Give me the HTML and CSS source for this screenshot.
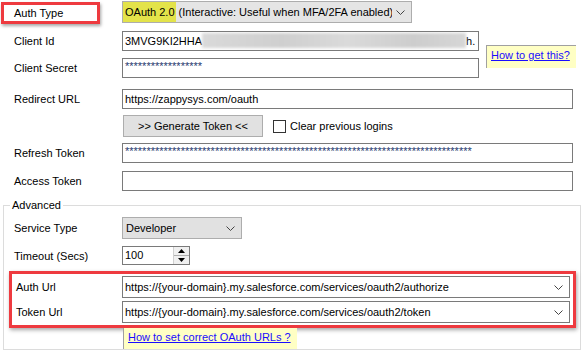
FILE: index.html
```html
<!DOCTYPE html>
<html lang="en">
<head>
  <meta charset="UTF-8">
  <title>OAuth Connection</title>
  <link rel="stylesheet" href="styles.css">
</head>
<body>
  <div class="form">
    <div class="row row-auth">
      <div class="lbl"><span class="mark">Auth Type</span></div>
      <div class="combo combo-auth">
        <span class="combo-text"><span class="hl">OAuth 2.0</span> (Interactive: Useful when MFA/2FA enabled)</span>
        <svg class="chev" width="9" height="5" viewBox="0 0 9 5"><path d="M0.5 0.5 L4.5 4.5 L8.5 0.5" fill="none" stroke="#444" stroke-width="1"/></svg>
      </div>
    </div>

    <div class="pair">
      <div class="pair-rows">
        <div class="row row-id">
          <div class="lbl">Client Id</div>
          <div class="field field-short">3MVG9KI2HHA<span class="blur"></span>h.</div>
        </div>
        <div class="row row-secret">
          <div class="lbl">Client Secret</div>
          <div class="field field-short secret">******************</div>
        </div>
      </div>
      <div class="help help-get"><a href="#">How to get this?</a></div>
    </div>

    <div class="row row-redirect">
      <div class="lbl">Redirect URL</div>
      <div class="field field-long">https://zappysys.com/oauth</div>
    </div>

    <div class="row row-generate">
      <div class="lbl"></div>
      <button class="btn">&gt;&gt; Generate Token &lt;&lt;</button>
      <span class="check"></span>
      <span class="check-text">Clear previous logins</span>
    </div>

    <div class="row row-refresh">
      <div class="lbl">Refresh Token</div>
      <div class="field field-long secret">*********************************************************************************</div>
    </div>

    <div class="row row-access">
      <div class="lbl">Access Token</div>
      <div class="field field-long"></div>
    </div>

    <fieldset class="group">
      <legend>Advanced</legend>

      <div class="row row-service">
        <div class="lbl">Service Type</div>
        <div class="combo combo-service">
          <span class="combo-text">Developer</span>
          <svg class="chev" width="9" height="5" viewBox="0 0 9 5"><path d="M0.5 0.5 L4.5 4.5 L8.5 0.5" fill="none" stroke="#444" stroke-width="1"/></svg>
        </div>
      </div>

      <div class="row row-timeout">
        <div class="lbl">Timeout (Secs)</div>
        <div class="field spin-field">
          <span class="spin-val">100</span>
          <span class="spin">
            <span class="spin-btn"><svg width="7" height="4" viewBox="0 0 7 4"><path d="M3.5 0 L7 4 L0 4 Z" fill="#000"/></svg></span>
            <span class="spin-btn"><svg width="7" height="4" viewBox="0 0 7 4"><path d="M0 0 L7 0 L3.5 4 Z" fill="#000"/></svg></span>
          </span>
        </div>
      </div>

      <div class="mark-box">
        <div class="row row-url">
          <div class="url-lbl">Auth Url</div>
          <div class="combo combo-url">
            <span class="combo-text">https://{your-domain}.my.salesforce.com/services/oauth2/authorize</span>
            <svg class="chev" width="9" height="5" viewBox="0 0 9 5"><path d="M0.5 0.5 L4.5 4.5 L8.5 0.5" fill="none" stroke="#444" stroke-width="1"/></svg>
          </div>
        </div>
        <div class="row row-url row-token">
          <div class="url-lbl">Token Url</div>
          <div class="combo combo-url">
            <span class="combo-text">https://{your-domain}.my.salesforce.com/services/oauth2/token</span>
            <svg class="chev" width="9" height="5" viewBox="0 0 9 5"><path d="M0.5 0.5 L4.5 4.5 L8.5 0.5" fill="none" stroke="#444" stroke-width="1"/></svg>
          </div>
        </div>
      </div>

      <div class="help help-urls"><a href="#">How to set correct OAuth URLs ?</a></div>
    </fieldset>
  </div>
</body>
</html>
```

FILE: styles.css
```css
* {
  box-sizing: border-box;
}
body {
  margin: 0;
  background-color: #fff;
  font-family: "Liberation Sans", Arial, sans-serif;
  font-size: 11px;
  color: #000;
}
.form {
  width: 583px;
  height: 354px;
  overflow: hidden;
}
.row {
  display: flex;
  align-items: center;
}
.lbl {
  width: 122px;
  flex-shrink: 0;
  padding-left: 14px;
  white-space: nowrap;
}
.row-auth {
  margin-top: 1px;
  height: 22px;
}
.row-auth .lbl {
  padding-left: 1px;
  align-self: flex-start;
}
.mark {
  display: block;
  width: 99px;
  height: 22px;
  margin-top: 1px;
  padding-left: 10px;
  line-height: 16px;
  border: 3px solid #ee3a3f;
  box-shadow: 1px 2px 3px rgba(0, 0, 0, 0.35);
}
.combo {
  display: flex;
  align-items: center;
  height: 22px;
  border: 1px solid #adadad;
  background-color: #e5e5e5;
  padding-left: 2px;
}
.combo-text {
  flex: 1;
  white-space: nowrap;
  overflow: hidden;
}
.chev {
  margin: 0 6px 0 4px;
  flex-shrink: 0;
}
.combo-auth {
  width: 290px;
  padding-left: 0;
}
.hl {
  display: inline-block;
  background-color: #e3e34a;
  padding: 4px 1px 4px 2px;
}
.field {
  height: 20px;
  border: 1px solid #7a7a7a;
  background-color: #fff;
  padding-left: 2px;
  line-height: 18px;
  white-space: nowrap;
  overflow: hidden;
}
.field-short {
  width: 357px;
}
.field-long {
  width: 451px;
}
.secret {
  line-height: 14px;
  color: #26386e;
}
.blur {
  display: inline-block;
  width: 264px;
  height: 15px;
  vertical-align: -3px;
  background: linear-gradient(90deg, #d9d9d9, #cfcfcf 30%, #dadada 55%, #cdcdcd 80%, #d6d6d6);
  filter: blur(1.5px);
}
.pair {
  display: flex;
  margin-top: 8px;
}
.row-id {
  height: 20px;
}
.row-secret {
  height: 20px;
  margin-top: 7px;
}
.help {
  background-color: #ffffc4;
  white-space: nowrap;
}
.help a {
  color: #1a0dff;
  text-decoration: underline;
}
.help-get {
  width: 90px;
  height: 23px;
  margin: 14px 0 0 7px;
  border-top: 1px solid #a0a0a0;
  border-left: 1px solid #a0a0a0;
  padding: 3px 0 0 4px;
}
.row-redirect {
  height: 20px;
  margin-top: 11px;
}
.row-generate {
  height: 22px;
  margin-top: 6px;
}
.row-generate .lbl {
  width: 123px;
}
.btn {
  width: 140px;
  height: 22px;
  margin: 0;
  padding: 0;
  border: 1px solid #adadad;
  background-color: #e1e1e1;
  font-family: inherit;
  font-size: 11px;
  color: #000;
}
.check {
  width: 13px;
  height: 13px;
  margin-left: 10px;
  border: 1px solid #333;
  background-color: #fff;
}
.check-text {
  margin-left: 4px;
}
.row-refresh {
  height: 20px;
  margin-top: 6px;
}
.row-access {
  height: 20px;
  margin-top: 8px;
}
.group {
  margin: 7px 2px 0 3px;
  padding: 0;
  border: 1px solid #dcdcdc;
  height: 152px;
  min-width: 0;
}
.group legend {
  margin-left: 6px;
  padding: 0 2px;
  line-height: 14px;
}
.group .lbl {
  width: 118px;
  padding-left: 10px;
}
.row-service {
  margin-top: 5px;
}
.combo-service {
  width: 120px;
  background-color: #e1e1e1;
  padding-left: 3px;
}
.row-timeout {
  margin-top: 7px;
}
.spin-field {
  display: flex;
  width: 68px;
  height: 19px;
  padding-left: 2px;
}
.spin-val {
  flex: 1;
  line-height: 17px;
}
.spin {
  display: flex;
  flex-direction: column;
  width: 16px;
  border-left: 1px solid #d0d0d0;
}
.spin-btn {
  flex: 1;
  display: flex;
  align-items: center;
  justify-content: center;
  background-color: #f0f0f0;
}
.spin-btn + .spin-btn {
  border-top: 1px solid #b0b0b0;
}
.mark-box {
  margin: 6px 4px 0 5px;
  padding: 2px 3px 2px 0;
  border: 3px solid #ee3a3f;
  box-shadow: 1px 2px 4px rgba(0, 0, 0, 0.35);
}
.url-lbl {
  width: 110px;
  flex-shrink: 0;
  padding-left: 4px;
  white-space: nowrap;
}
.combo-url {
  flex: 1;
  background-color: #fff;
  border-color: #7a7a7a;
  padding-left: 2px;
}
.row-token {
  margin-top: 3px;
}
.help-urls {
  width: 174px;
  height: 21px;
  margin-left: 119px;
  border-left: 1px solid #a0a0a0;
  padding: 3px 0 0 4px;
}
```
